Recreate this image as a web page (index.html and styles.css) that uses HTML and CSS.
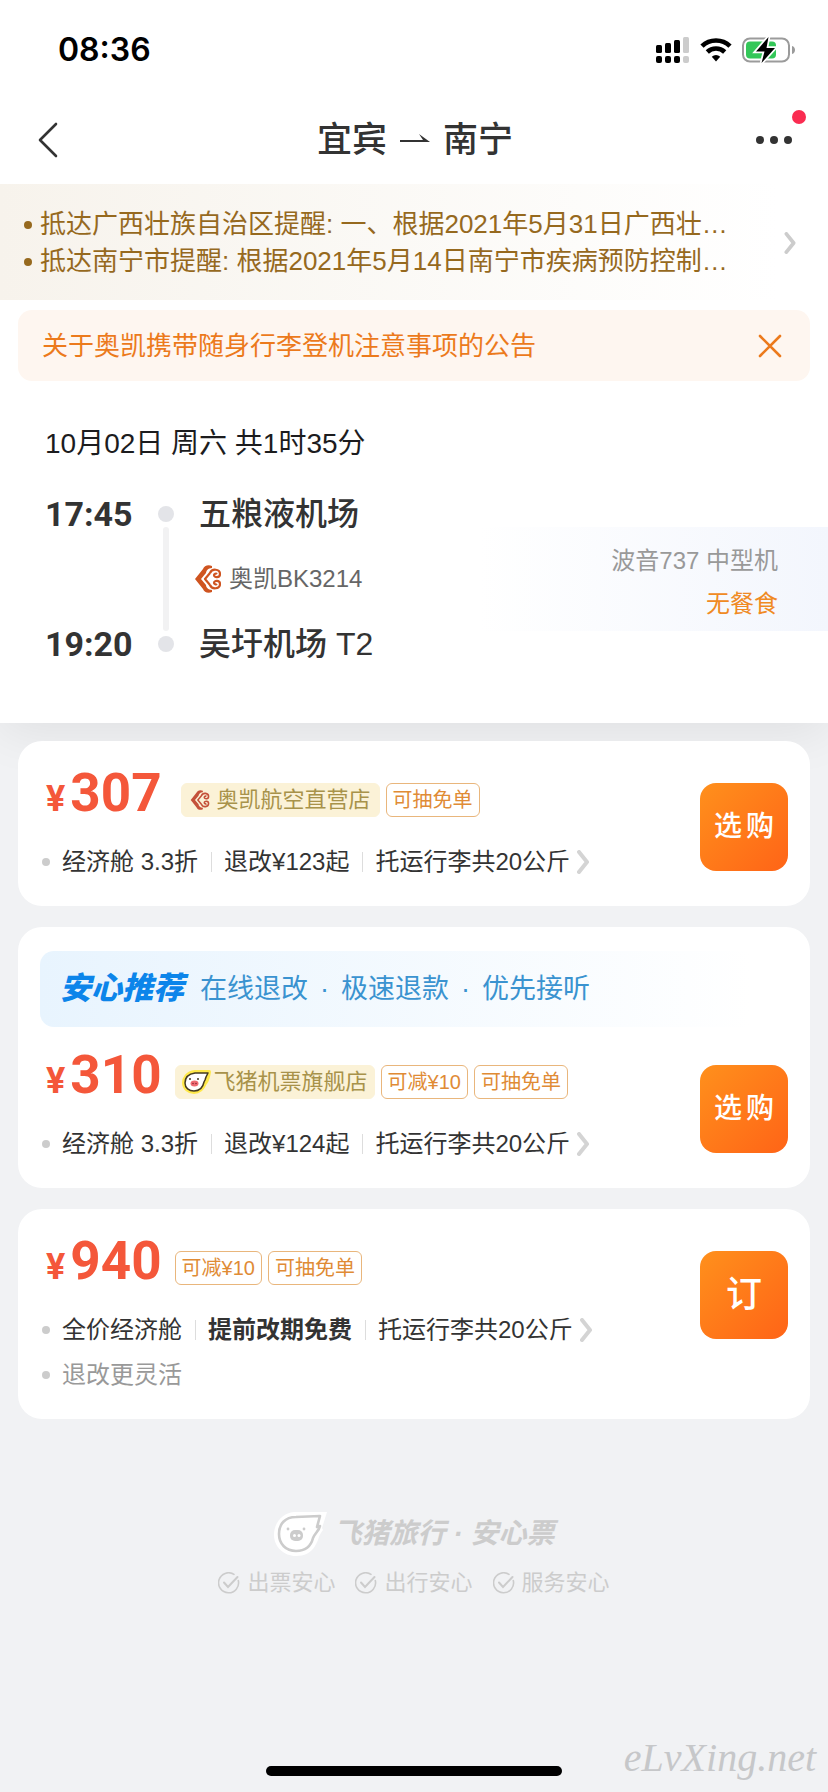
FILE: index.html
```html
<!DOCTYPE html>
<html lang="zh-CN">
<head>
<meta charset="utf-8">
<meta name="viewport" content="width=device-width, initial-scale=1">
<title>宜宾 ⇀ 南宁</title>
<link rel="stylesheet" href="styles.css">
</head>
<body>
<svg class="defs" aria-hidden="true">
  <symbol id="airline" viewBox="0 0 26 28">
    <path d="M17 1C13-1 9 1 8 4L0 14l8 10c1 3 5 5 9 3v-2c-4 0-6-3-6-5l-5-6 5-6c0-2 2-5 6-5z" fill="currentColor"/>
    <path d="M15 8l-5 6 5 6M15 8c2-5 10-4 10 1 0 4-6 4-6 1 0-1 2-2 3-1M15 20c2 5 10 4 10-1 0-4-6-4-6-1 0 1 2 2 3 1" fill="none" stroke="currentColor" stroke-width="2.200" stroke-linejoin="round"/>
  </symbol>
  <symbol id="chevron" viewBox="0 0 12 24">
    <path d="M2 2l8 10-8 10" fill="none" stroke="currentColor" stroke-width="4" stroke-linecap="round" stroke-linejoin="round"/>
  </symbol>
  <symbol id="check" viewBox="0 0 22 22">
    <path d="M20.300 8.500A10 10 0 1 1 16 2.400" fill="none" stroke="currentColor" stroke-width="1.600" stroke-linecap="round"/>
    <path d="M6 10.500l4 4.500 9.500-10" fill="none" stroke="currentColor" stroke-width="2" stroke-linecap="round"/>
  </symbol>
</svg>

<section class="top">
  <div class="status">
    <time class="clock">08:36</time>
    <div class="status-icons">
      <svg width="34" height="26" viewBox="0 0 34 26">
        <g fill="#000"><rect x="0" y="8" width="6" height="8" rx="1.500"/><rect x="9" y="6" width="6" height="10" rx="1.500"/><rect x="18" y="3" width="6" height="13" rx="1.500"/><rect x="0" y="19" width="6" height="7" rx="2"/><rect x="9" y="19" width="6" height="7" rx="2"/><rect x="18" y="19" width="6" height="7" rx="2"/></g>
        <g fill="#ccc"><rect x="27" y="0" width="6" height="16" rx="1.500"/><rect x="27" y="19" width="6" height="7" rx="2"/></g>
      </svg>
      <svg width="32" height="24" viewBox="0 0 32 24">
        <path d="M2 8.200a20 20 0 0 1 28 0M7.300 14a12.500 12.500 0 0 1 17.400 0" fill="none" stroke="#000" stroke-width="4.600"/>
        <path d="M11.800 18.800a6 6 0 0 1 8.400 0L16 23.400z" fill="#000"/>
      </svg>
      <svg width="54" height="26" viewBox="0 0 54 26">
        <rect x="1" y="1.500" width="46" height="23" rx="7" fill="#fff" stroke="#9b9b9b" stroke-width="2"/>
        <rect x="4" y="4.500" width="30" height="17" rx="4" fill="#34c759"/>
        <path d="M50 9c4 1 4 7 0 8z" fill="#9b9b9b"/>
        <path d="M26.500 0L14 14.500h8.500L19.500 26 33 11h-8.500z" fill="#000" stroke="#fff" stroke-width="3.500" paint-order="stroke"/>
      </svg>
    </div>
  </div>

  <header class="nav">
    <button class="icon-btn" aria-label="返回"><svg width="20" height="36" viewBox="0 0 20 36"><path d="M18 2L2 18l16 16" fill="none" stroke="#333" stroke-width="2.600" stroke-linecap="round" stroke-linejoin="round"/></svg></button>
    <h1 class="title">宜宾<svg width="32" height="12" viewBox="0 0 32 12"><path d="M1 8h30L20 0l4 6H1z" fill="#333"/></svg>南宁</h1>
    <button class="icon-btn more" aria-label="更多"><svg width="36" height="8" viewBox="0 0 36 8"><g fill="#333"><circle cx="4" cy="4" r="4"/><circle cx="18" cy="4" r="4"/><circle cx="32" cy="4" r="4"/></g></svg><span class="dot-badge"></span></button>
  </header>

  <a class="notice" href="#">
    <ul class="notice-list">
      <li>抵达广西壮族自治区提醒: 一、根据2021年5月31日广西壮…</li>
      <li>抵达南宁市提醒: 根据2021年5月14日南宁市疾病预防控制…</li>
    </ul>
    <svg class="notice-arrow" width="12" height="22"><use href="#chevron"/></svg>
  </a>

  <div class="alert">
    <p class="alert-text">关于奥凯携带随身行李登机注意事项的公告</p>
    <button class="icon-btn" aria-label="关闭"><svg width="24" height="24" viewBox="0 0 24 24"><path d="M2 2l20 20M22 2L2 22" fill="none" stroke="#ec7a1c" stroke-width="2.600" stroke-linecap="round"/></svg></button>
  </div>

  <div class="flight">
    <p class="date">10月02日 周六 共1时35分</p>
    <div class="flight-body">
      <div class="route">
        <time class="time">17:45</time><span class="stop"></span><span class="airport">五粮液机场</span>
        <span class="track"></span>
        <span class="carrier"><svg width="26" height="28"><use href="#airline"/></svg>奥凯BK3214</span>
        <time class="time">19:20</time><span class="stop"></span><span class="airport">吴圩机场 T2</span>
      </div>
      <div class="plane">
        <span>波音737 中型机</span>
        <span class="meal">无餐食</span>
      </div>
    </div>
  </div>
</section>

<main class="fares">
  <article class="card">
    <div class="fare">
      <div class="info">
        <div class="price-row wide">
          <p class="price"><span class="yen">¥</span>307</p>
          <div class="tags">
            <span class="tag store roomy"><svg class="logo" width="20" height="20"><use href="#airline"/></svg>奥凯航空直营店</span>
            <span class="tag">可抽免单</span>
          </div>
        </div>
        <ul class="details">
          <li><span>经济舱 3.3折</span><span>退改¥123起</span><span>托运行李共20公斤</span><svg class="go" width="12" height="24"><use href="#chevron"/></svg></li>
        </ul>
      </div>
      <button class="buy"><span>选</span><span>购</span></button>
    </div>
  </article>

  <article class="card">
    <div class="promo">
      <strong class="promo-name">安心推荐</strong>
      <p class="promo-list"><span>在线退改</span><span>·</span><span>极速退款</span><span>·</span><span>优先接听</span></p>
    </div>
    <div class="fare">
      <div class="info">
        <div class="price-row">
          <p class="price"><span class="yen">¥</span>310</p>
          <div class="tags">
            <span class="tag store"><svg width="30" height="24" viewBox="0 0 30 24"><path d="M27 2L13 2C5 3 2 8 2 13c0 5 5 9 10 9 6 0 9-4 11-9 3-3 3-7 4-11z" fill="#fff" stroke="#ffe94a" stroke-width="4" stroke-linejoin="round"/><path d="M26 3L13 3C6 4 3 8 3 13c0 5 4 8 9 8 6 0 9-4 10-9l1-2 1-3z" fill="#fff" stroke="#443a20" stroke-width="1.500" stroke-linejoin="round"/><ellipse cx="12.500" cy="13.500" rx="4" ry="3" fill="#ee6a72"/><circle cx="8" cy="9" r="1" fill="#443a20"/><circle cx="16" cy="9" r="1" fill="#443a20"/><circle cx="11" cy="13.500" r=".8" fill="#8c2a35"/><circle cx="14" cy="13.500" r=".8" fill="#8c2a35"/></svg>飞猪机票旗舰店</span>
            <span class="tag">可减¥10</span>
            <span class="tag">可抽免单</span>
          </div>
        </div>
        <ul class="details">
          <li><span>经济舱 3.3折</span><span>退改¥124起</span><span>托运行李共20公斤</span><svg class="go" width="12" height="24"><use href="#chevron"/></svg></li>
        </ul>
      </div>
      <button class="buy"><span>选</span><span>购</span></button>
    </div>
  </article>

  <article class="card">
    <div class="fare">
      <div class="info">
        <div class="price-row">
          <p class="price"><span class="yen">¥</span>940</p>
          <div class="tags">
            <span class="tag">可减¥10</span>
            <span class="tag">可抽免单</span>
          </div>
        </div>
        <ul class="details">
          <li><span>全价经济舱</span><strong>提前改期免费</strong><span>托运行李共20公斤</span><svg class="go" width="12" height="24"><use href="#chevron"/></svg></li>
          <li class="muted"><span>退改更灵活</span></li>
        </ul>
      </div>
      <button class="buy single">订</button>
    </div>
  </article>
</main>

<footer class="brand">
  <div class="brand-name">
    <svg width="54" height="46" viewBox="0 0 54 46"><path d="M53 1l-5 16 1 2c-5 6-4 10-8 16-4 7-11 10-19 10C10 45 0 36 0 24 0 12 8 2 20 1z" fill="#fff"/><path d="M46 5L22 6C11 6 5 13 5 23c0 10 7 17 17 17 9 0 15-5 17-13 2-5 6-7 7-12l-3 1z" fill="none" stroke="#ccc" stroke-width="2.600" stroke-linejoin="round"/><rect x="16" y="19" width="13" height="11" rx="5" fill="#ccc"/><circle cx="20.500" cy="24.500" r="1.500" fill="#fff"/><circle cx="25" cy="24.500" r="1.500" fill="#fff"/><circle cx="14" cy="18" r="1.400" fill="#ccc"/><circle cx="30" cy="18" r="1.400" fill="#ccc"/></svg>
    <strong>飞猪旅行 · 安心票</strong>
  </div>
  <ul class="promises">
    <li><svg width="22" height="22"><use href="#check"/></svg>出票安心</li>
    <li><svg width="22" height="22"><use href="#check"/></svg>出行安心</li>
    <li><svg width="22" height="22"><use href="#check"/></svg>服务安心</li>
  </ul>
</footer>

<div class="bottom">
  <span></span>
  <span class="home-bar"></span>
  <span class="site">eLvXing.net</span>
</div>
</body>
</html>
```
FILE: styles.css
```css
* {
  box-sizing: border-box;
  margin: 0;
  padding: 0;
}

body {
  min-height: 100vh;
  display: flex;
  flex-direction: column;
  background: #f1f2f4;
  color: #333;
  font-family: "Liberation Sans", "Noto Sans CJK SC", sans-serif;
  font-size: 24px;
  line-height: 36px;
}

ul {
  list-style: none;
}

button {
  border: 0;
  background: none;
  color: inherit;
  font: inherit;
  cursor: pointer;
}

svg {
  display: block;
  flex: none;
}

.defs {
  position: absolute;
  width: 0;
  height: 0;
}

.top {
  background: #fff;
  padding-bottom: 61px;
  box-shadow: 0 8px 48px rgba(0, 0, 0, 0.08);
}

.status {
  display: flex;
  align-items: center;
  justify-content: space-between;
  height: 98px;
  padding: 2px 32px 0 58px;
}

.clock {
  font-family: Inter, sans-serif;
  font-size: 32px;
  font-weight: 600;
  color: #000;
}

.status-icons {
  display: flex;
  align-items: center;
  gap: 10px;
}

.nav {
  display: grid;
  grid-template-columns: 1fr auto 1fr;
  align-items: center;
  height: 86px;
  padding: 0 36px 2px 38px;
}

.icon-btn {
  position: relative;
  display: flex;
}

.title {
  display: flex;
  align-items: center;
  gap: 12px;
  font-size: 35px;
  font-weight: 500;
}

.more {
  justify-self: end;
}

.dot-badge {
  position: absolute;
  top: -26px;
  right: -14px;
  width: 14px;
  height: 14px;
  border-radius: 50%;
  background: #fa2c51;
}

.notice {
  display: flex;
  align-items: center;
  justify-content: space-between;
  height: 116px;
  padding: 2px 32px 0 24px;
  background: linear-gradient(90deg, #f7f3ec, #fff 94%);
  color: #96691e;
  text-decoration: none;
}

.notice-list {
  min-width: 0;
  font-size: 26px;
  line-height: 37px;
}

.notice-list li {
  display: flex;
  align-items: center;
  gap: 8px;
  white-space: nowrap;
}

.notice-list li::before,
.details li::before {
  content: "";
  flex: none;
  width: 8px;
  height: 8px;
  border-radius: 50%;
  background: currentColor;
}

.notice-arrow {
  color: #ccc;
}

.alert {
  display: flex;
  align-items: center;
  justify-content: space-between;
  margin: 10px 18px 0;
  padding: 18px 28px 17px 24px;
  border-radius: 14px;
  background: #fef6f0;
  color: #ec7a1c;
}

.alert-text {
  font-size: 26px;
}

.date {
  margin: 45px 45px 0;
  font-size: 28px;
  color: #1c1c1e;
}

.flight-body {
  display: flex;
  align-items: center;
  justify-content: space-between;
  margin-top: 34px;
}

.route {
  display: grid;
  grid-template-columns: 100px 16px auto;
  column-gap: 13px;
  align-items: center;
  padding-left: 45px;
}

.time {
  font-family: Roboto, sans-serif;
  font-size: 34px;
  font-weight: 700;
}

.stop {
  width: 16px;
  height: 16px;
  border-radius: 50%;
  background: #e3e4e8;
}

.airport {
  padding-left: 12px;
  font-size: 32px;
  font-weight: 500;
}

.track {
  grid-column: 2;
  justify-self: center;
  width: 6px;
  height: 104px;
  margin: -5px 0;
  border-radius: 3px;
  background: #f2f2f3;
}

.carrier {
  display: flex;
  align-items: center;
  gap: 8px;
  padding-left: 8px;
  color: #666;
}

.carrier svg {
  color: #cf5420;
}

.plane {
  flex: none;
  width: 42%;
  padding: 12px 50px 6px 0;
  background: linear-gradient(90deg, #fff, #f3f6fd);
  color: #999;
  text-align: right;
  line-height: 43px;
}

.plane span {
  display: block;
}

.plane .meal {
  color: #f08a24;
}

.fares {
  position: relative;
  display: flex;
  flex-direction: column;
  gap: 21px;
  padding: 18px 18px 0;
}

.card {
  padding: 24px 22px 22px;
  border-radius: 24px;
  background: #fff;
}

.fare {
  display: flex;
  align-items: flex-start;
  justify-content: space-between;
}

.price-row {
  display: flex;
  align-items: flex-end;
  gap: 13px;
  height: 56px;
  padding-left: 6px;
}

.price-row.wide {
  gap: 19px;
}

.price {
  font-family: Roboto, sans-serif;
  font-size: 53px;
  font-weight: 700;
  line-height: 56px;
  color: #f4573a;
}

.yen {
  margin-right: 5px;
  font-size: 36px;
  line-height: 36px;
}

.tags {
  display: flex;
  gap: 6px;
  padding-bottom: 4px;
}

.tag {
  display: flex;
  align-items: center;
  height: 34px;
  padding: 0 6px;
  border: 1px solid #e9b67c;
  border-radius: 6px;
  font-size: 20px;
  color: #e08b35;
  white-space: nowrap;
}

.tag.store {
  gap: 2px;
  border-color: #fbf2d7;
  background: #fbf2d7;
  color: #a8924a;
  font-size: 22px;
}

.tag.roomy {
  gap: 7px;
  padding: 0 8px;
}

.tag .logo {
  color: #c4513a;
}

.details {
  margin-top: 18px;
}

.details li {
  display: flex;
  align-items: center;
  height: 45px;
  padding-left: 2px;
  white-space: nowrap;
}

.details li::before {
  margin-right: 12px;
  background: #ccc;
}

.details li > * + * {
  margin-left: 13px;
}

.details li > span + span,
.details li > strong + span,
.details li > span + strong {
  display: flex;
  align-items: center;
}

.details li > span + span::before,
.details li > strong + span::before,
.details li > span + strong::before {
  content: "";
  width: 1px;
  height: 20px;
  margin-right: 12px;
  background: #ddd;
}

.details .go {
  margin-left: 7px;
  color: #d4d4d4;
}

.details .muted {
  color: #999;
}

.buy {
  display: flex;
  flex: none;
  align-items: center;
  justify-content: center;
  gap: 4px;
  width: 88px;
  height: 88px;
  margin-top: 18px;
  border-radius: 16px;
  background: linear-gradient(135deg, #ff901c, #ff6417);
  color: #fff;
  font-size: 28px;
  font-weight: 500;
}

.buy.single {
  font-size: 36px;
}

.promo {
  display: flex;
  align-items: center;
  gap: 16px;
  height: 76px;
  margin-bottom: 20px;
  padding-left: 20px;
  border-radius: 14px;
  background: linear-gradient(90deg, #e8f4fe, #fff 95%);
}

.promo-name {
  font-size: 31px;
  font-weight: 900;
  font-style: italic;
  color: #0c85ea;
}

.promo-list {
  display: flex;
  gap: 12px;
  font-size: 27px;
  color: #3a93d0;
}

.brand {
  display: flex;
  flex-direction: column;
  align-items: center;
  gap: 8px;
  padding-top: 92px;
  color: #ccc;
}

.brand-name {
  display: flex;
  align-items: center;
  gap: 6px;
  font-size: 28px;
  font-style: italic;
}

.promises {
  display: flex;
  gap: 20px;
  font-size: 22px;
}

.promises li {
  display: flex;
  align-items: center;
  gap: 7px;
}

.bottom {
  display: grid;
  grid-template-columns: 1fr 296px 1fr;
  align-items: end;
  margin-top: auto;
  padding-bottom: 16px;
}

.home-bar {
  height: 10px;
  border-radius: 5px;
  background: #000;
}

.site {
  justify-self: end;
  padding-right: 12px;
  font-family: "Liberation Serif", serif;
  font-size: 40px;
  font-style: italic;
  color: #c6c7c9;
}
```
